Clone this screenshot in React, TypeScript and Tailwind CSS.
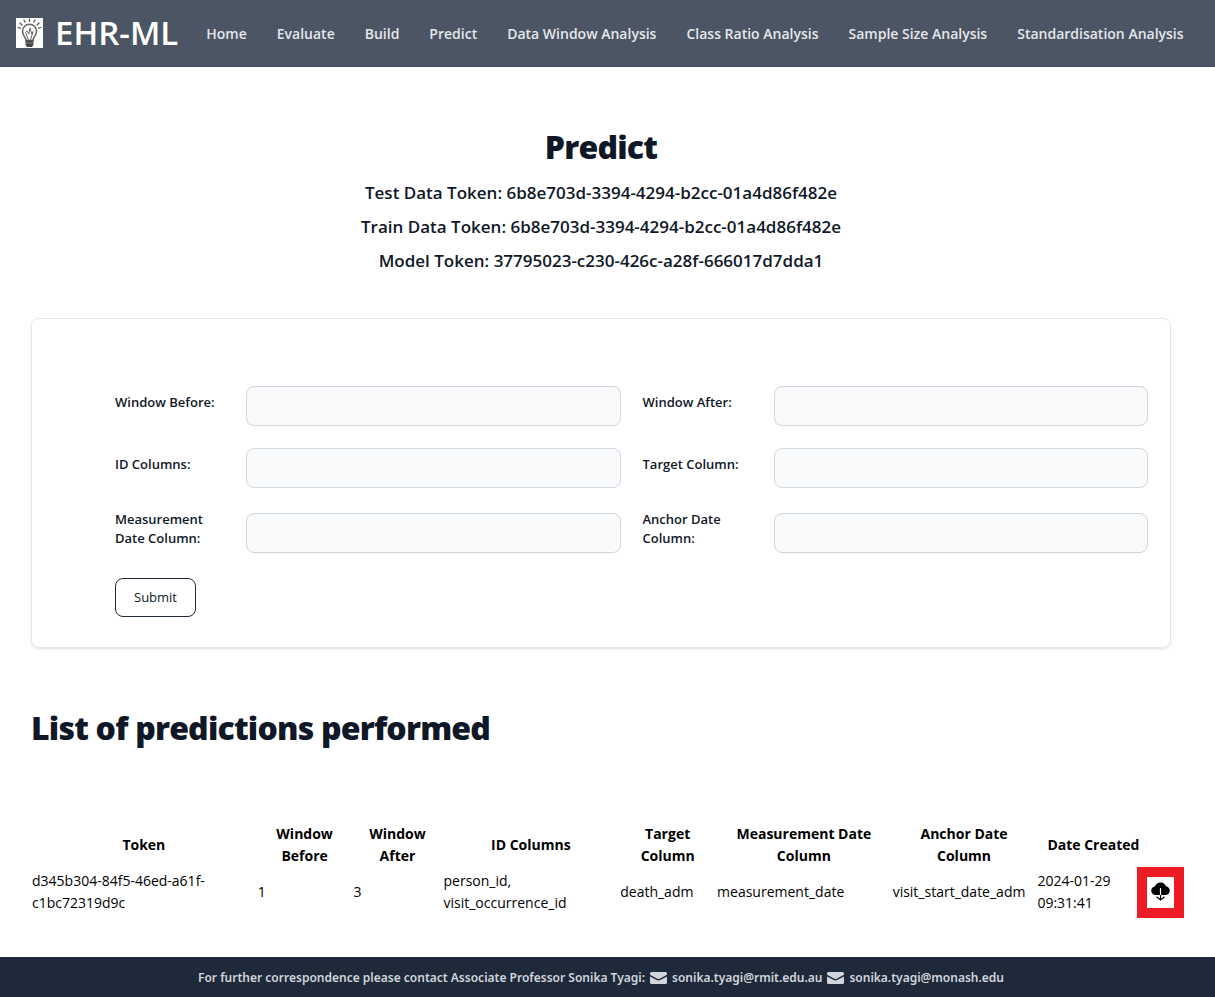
import React from "react";

const navItems = [
  "Home",
  "Evaluate",
  "Build",
  "Predict",
  "Data Window Analysis",
  "Class Ratio Analysis",
  "Sample Size Analysis",
  "Standardisation Analysis",
];

const tokens = [
  "Test Data Token: 6b8e703d-3394-4294-b2cc-01a4d86f482e",
  "Train Data Token: 6b8e703d-3394-4294-b2cc-01a4d86f482e",
  "Model Token: 37795023-c230-426c-a28f-666017d7dda1",
];

const fields = [
  { id: "window-before", label: "Window Before:" },
  { id: "window-after", label: "Window After:" },
  { id: "id-columns", label: "ID Columns:" },
  { id: "target-column", label: "Target Column:" },
  { id: "measurement-date", label: "Measurement Date Column:" },
  { id: "anchor-date", label: "Anchor Date Column:" },
];

const columns = [
  { name: "Token", width: "w-[19.8%]" },
  { name: "Window Before", width: "w-[8.4%]" },
  { name: "Window After", width: "w-[7.9%]" },
  { name: "ID Columns", width: "w-[15.5%]" },
  { name: "Target Column", width: "w-[8.5%]" },
  { name: "Measurement Date Column", width: "w-[15.4%]" },
  { name: "Anchor Date Column", width: "w-[12.7%]" },
  { name: "Date Created", width: "w-[10%]" },
];

const predictions = [
  [
    "d345b304-84f5-46ed-a61f-c1bc72319d9c",
    "1",
    "3",
    "person_id, visit_occurrence_id",
    "death_adm",
    "measurement_date",
    "visit_start_date_adm",
    "2024-01-29 09:31:41",
  ],
];

function BulbLogo() {
  return (
    <svg viewBox="0 0 27 30" className="h-[30px] w-[27px] shrink-0 bg-white" fill="none" aria-hidden="true">
      <g stroke="#555" strokeWidth="1.2" strokeLinecap="round">
        <path d="M13.5 1v2.4M8 2l1.2 2.3M19 2l-1.2 2.3M4 5l2 2M23 5l-2 2M2 9.5l2.4.6M25 9.5l-2.4.6" />
        <path
          d="M10 22.5c0-3.500-3.500-4.600-3.500-9.300a7 7 0 0 1 14 0c0 4.700-3.500 5.800-3.500 9.300z"
          stroke="#666"
          strokeWidth="1.6"
        />
        <path d="M12.500 22l-3-7.500 1.500-1.500 1.800 3 1.200-6 1.700 6 1.300-2.500L14.500 22" stroke="#666" strokeWidth="1" />
      </g>
      <path d="M9.500 22.500h8v4l-1.500 2.500h-5l-1.500-2.500z" fill="#444" />
      <path d="M10 25h7" stroke="#aaa" strokeWidth=".6" />
    </svg>
  );
}

function Envelope() {
  return (
    <svg viewBox="0 0 17 12" className="h-3 w-[17px] shrink-0" fill="currentColor" aria-hidden="true">
      <path d="M1.500 0h14A1.500 1.500 0 0 1 17 1.500v1.300L9.600 6.700a2.400 2.400 0 0 1-2.200 0L0 2.800V1.500A1.500 1.500 0 0 1 1.500 0z" />
      <path d="M0 4.500l6.800 3.600a3.700 3.700 0 0 0 3.400 0L17 4.500v6a1.500 1.500 0 0 1-1.500 1.500h-14A1.500 1.500 0 0 1 0 10.500z" />
    </svg>
  );
}

function CloudDownload() {
  return (
    <svg viewBox="0 0 19 19" className="h-[19px] w-[19px]" fill="none" aria-hidden="true">
      <path
        d="M5 13A4.500 4.500 0 0 1 .2 8.800C.2 6.500 1.900 4.600 4.100 4.300 4.700 2 6.900.4 9.500.4s4.800 1.600 5.400 3.900c2.200.3 3.900 2.200 3.900 4.500A4.500 4.500 0 0 1 14 13z"
        fill="#000"
      />
      <path d="M9.500 6v7" stroke="#fff" strokeWidth="1.200" />
      <path d="M9.500 13v5M5.500 14.800l4 3.200 4-3.200" stroke="#000" strokeWidth="1.200" />
    </svg>
  );
}

export default function App() {
  return (
    <div className="flex min-h-screen flex-col bg-white font-['Open_Sans','Noto_Sans',sans-serif] text-gray-900">
      <header className="flex h-[67px] items-center bg-[#4b5563] pl-4">
        <a href="#" className="flex items-center gap-3 pb-0.5 text-[33px] font-semibold whitespace-nowrap text-white">
          <BulbLogo />
          EHR-ML
        </a>
        <nav className="ml-7 flex items-center gap-[30px] text-sm font-semibold whitespace-nowrap text-gray-200">
          {navItems.map((item) => (
            <a key={item} href="#">
              {item}
            </a>
          ))}
        </nav>
      </header>

      <main className="grow pr-11 pl-[31px]">
        <section className="pt-[60px] text-center">
          <h1 className="text-[32px] leading-10 font-extrabold tracking-tight">Predict</h1>
          <div className="mt-[9px] text-[17px] leading-[34px] font-semibold">
            {tokens.map((token) => (
              <p key={token}>{token}</p>
            ))}
          </div>
        </section>

        <form
          className="mt-10 rounded-lg border border-gray-200 pt-[67px] pr-[22px] pb-[30px] pl-[83px] shadow-sm"
          onSubmit={(event) => event.preventDefault()}
        >
          <div className="grid grid-cols-[109px_1fr_109px_1fr] items-center gap-[22px]">
            {fields.map((field) => (
              <React.Fragment key={field.id}>
                <label htmlFor={field.id} className="mb-2 text-[13px] leading-[19px] font-semibold">
                  {field.label}
                </label>
                <input
                  id={field.id}
                  type="text"
                  className="h-10 w-full min-w-0 rounded-lg border border-gray-300 bg-[#f9fafb] px-3 text-sm"
                />
              </React.Fragment>
            ))}
          </div>
          <button
            type="submit"
            className="mt-[22px] block h-[39px] rounded-lg border border-gray-800 px-[18px] text-[13px]"
          >
            Submit
          </button>
        </form>

        <h2 className="mt-[60px] text-[32px] leading-10 font-extrabold tracking-tight">
          List of predictions performed
        </h2>

        <table className="mt-[74px] w-full table-fixed text-sm leading-[22px] text-black">
          <thead>
            <tr>
              {columns.map((column) => (
                <th key={column.name} scope="col" className={`${column.width} px-1.5 pt-px pb-0.5 font-bold`}>
                  {column.name}
                </th>
              ))}
              <td />
            </tr>
          </thead>
          <tbody>
            {predictions.map((row) => (
              <tr key={row[0]}>
                {row.map((value, index) => (
                  <td key={columns[index].name} className="p-px">
                    {value}
                  </td>
                ))}
                <td className="relative">
                  <button
                    type="button"
                    aria-label="Download"
                    className="absolute -top-0.5 -right-[13px] flex h-[51px] w-[47px] items-center justify-center border-[10px] border-[#ed1c24] bg-white pb-0.5"
                  >
                    <CloudDownload />
                  </button>
                </td>
              </tr>
            ))}
          </tbody>
        </table>
      </main>

      <footer className="flex h-10 items-center justify-center gap-[5px] bg-gray-800 pt-0.5 pr-[13px] font-['Noto_Sans',sans-serif] text-xs font-semibold text-gray-300">
        <span>For further correspondence please contact Associate Professor Sonika Tyagi:</span>
        <Envelope />
        <a href="mailto:sonika.tyagi@rmit.edu.au">sonika.tyagi@rmit.edu.au</a>
        <Envelope />
        <a href="mailto:sonika.tyagi@monash.edu">sonika.tyagi@monash.edu</a>
      </footer>
    </div>
  );
}
